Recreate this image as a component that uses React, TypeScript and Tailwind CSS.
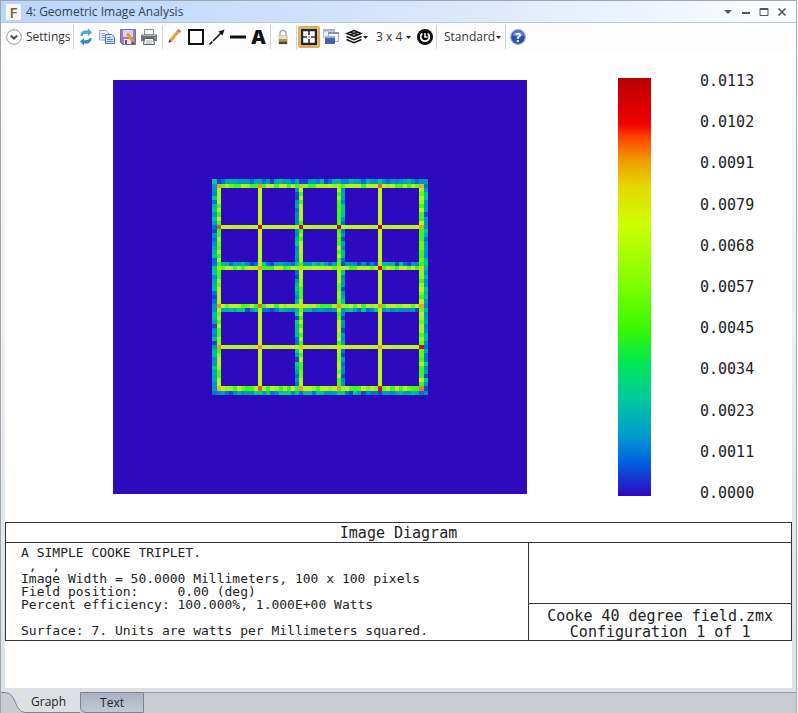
import type { ReactNode } from 'react';

const LINES = [25, 35, 45, 54, 64, 74];

// Grid lines that spill over into a neighbouring pixel row or column
const SPILL: Record<number, number> = { 25: 24, 45: 44, 54: 55, 74: 75 };

const NODES = [
  ['#e8a41c', '#ec9422', '#d8c020', '#c8e01c', '#ee6a14', '#dcb41e'],
  ['#e4520c', '#d01008', '#c80c08', '#b00c10', '#b40c10', '#dca81c'],
  ['#9cf418', '#ec9c1c', '#dcc41c', '#d8d81c', '#c81008', '#c8dc1c'],
  ['#e89c1c', '#e87410', '#d8dc1c', '#eca01c', '#e89c1c', '#e0a81c'],
  ['#e89c1c', '#ec941c', '#dcc81c', '#d0e41c', '#e0ac1c', '#c40c0c'],
  ['#dcc01c', '#e8640c', '#e4a41c', '#e8a01c', '#d01808', '#e87c14'],
];

const STEADY = ['#c4f41c', '#bcf41c', '#c8ee20', '#b4f81c'];
const MIXED = ['#4cf80c', '#8cfc10', '#b8f41c', '#3cf81c', '#a4f814', '#68fc0c', '#c0f01c'];
const FRINGE = ['#0094c8', '#00a8b4', '#0070dc', '#00b8a4', '#0088d0', '#1448d4', '#00c898', '#009cc0'];

const noise = (x: number, y: number) => {
  const n = Math.sin(x * 127.1 + y * 311.7) * 43758.5453;
  return n - Math.floor(n);
};

const pick = (list: string[], x: number, y: number) => list[Math.floor(noise(x, y) * list.length)];

function buildCells() {
  const cells = new Map<string, string>();
  const put = (x: number, y: number, fill: string) => cells.set(`${x},${y}`, fill);

  for (const line of LINES) {
    const side = SPILL[line];
    if (!side) continue;
    for (let i = 24; i <= 75; i++) {
      put(side, i, pick(FRINGE, side, i));
      put(i, side, pick(FRINGE, i, side));
    }
  }
  for (const line of LINES) {
    const colours = SPILL[line] ? MIXED : STEADY;
    for (let i = 25; i <= 74; i++) {
      put(line, i, pick(colours, line, i));
      put(i, line, pick(line === 54 ? [...MIXED, ...STEADY] : colours, i, line));
    }
  }
  LINES.forEach((y, row) => LINES.forEach((x, col) => put(x, y, NODES[row][col])));
  return [...cells].map(([key, fill]) => {
    const [x, y] = key.split(',').map(Number);
    return { x, y, fill };
  });
}

const CELLS = buildCells();

const SCALE = ['0.0113', '0.0102', '0.0091', '0.0079', '0.0068', '0.0057', '0.0045', '0.0034', '0.0023', '0.0011', '0.0000'];

const DETAILS = `A SIMPLE COOKE TRIPLET.
 ,  ,
Image Width = 50.0000 Millimeters, 100 x 100 pixels
Field position:     0.00 (deg)
Percent efficiency: 100.000%, 1.000E+00 Watts

Surface: 7. Units are watts per Millimeters squared.`;

const SOURCE = `Cooke 40 degree field.zmx
Configuration 1 of 1`;

function Icon({ children }: { children: ReactNode }) {
  return (
    <svg viewBox="0 0 18 18" className="size-[18px] shrink-0" fill="none" aria-hidden="true">
      {children}
    </svg>
  );
}

function Tool({ label, children }: { label: string; children: ReactNode }) {
  return (
    <button type="button" aria-label={label} title={label} className="flex w-[21px] shrink-0 items-center justify-center">
      <Icon>{children}</Icon>
    </button>
  );
}

function Separator() {
  return <div className="mx-px h-6 w-px shrink-0 bg-[#cfd3d8]" />;
}

function Caret() {
  return (
    <svg viewBox="0 0 5 3" className="h-[3px] w-[5px] shrink-0" aria-hidden="true">
      <path d="M0 0h5L2.5 3z" fill="#222" />
    </svg>
  );
}

function TitleBar() {
  return (
    <header className="flex h-[22px] shrink-0 items-center border-b border-[#b5c9de] bg-linear-to-r from-[#b9d5fa] via-[#d8e7fc] via-55% to-[#fdfdff] pr-[5px] pl-[5px]">
      <span className="mr-[5px] flex h-4 w-[15px] items-center justify-center bg-[#f7f8f4] text-[15px] leading-4 font-semibold text-[#66664e]">
        F
      </span>
      <h1 className="flex-1 text-[12px] text-[#33404f]">4: Geometric Image Analysis</h1>
      <div className="flex items-center text-[#555]">
        <button type="button" aria-label="Window menu" className="flex w-[18px] justify-center">
          <svg viewBox="0 0 12 12" className="size-3"><path d="M2 4h8L6 8z" fill="currentColor" /></svg>
        </button>
        <button type="button" aria-label="Minimize" className="flex w-[18px] justify-center">
          <svg viewBox="0 0 12 12" className="size-3"><path d="M2 6h8v2H2z" fill="currentColor" /></svg>
        </button>
        <button type="button" aria-label="Maximize" className="flex w-[18px] justify-center">
          <svg viewBox="0 0 12 12" className="size-3"><path d="M2 2.5h8v7H2zM2 3.5h8" fill="none" stroke="currentColor" /></svg>
        </button>
        <button type="button" aria-label="Close" className="flex w-[18px] justify-center">
          <svg viewBox="0 0 12 12" className="size-3"><path d="M2.5 2.5l7 7M9.5 2.5l-7 7" stroke="currentColor" strokeWidth="1.6" /></svg>
        </button>
      </div>
    </header>
  );
}

function Toolbar() {
  return (
    <div role="toolbar" className="flex h-7 shrink-0 items-center bg-[#fdfdfd] pl-1 text-[12px] text-[#333]">
      <button type="button" className="flex w-[67px] shrink-0 items-center gap-[3px]">
        <Icon>
          <circle cx="9" cy="9" r="7.3" fill="#fff" stroke="#999" />
          <path d="M5.8 7.5L9 10.7l3.2-3.2" stroke="#444" strokeWidth="1.8" />
        </Icon>
        Settings
      </button>
      <Separator />

      <Tool label="Refresh">
        <path d="M3.5 8c0-3.500 2-5.500 5.500-5.500h2V.5L15 4.500l-4 3.500V5.800H9C7 5.800 6 6.500 5.500 8z" fill="#45a6da" />
        <path d="M14.500 10c0 3.500-2 5.500-5.500 5.500H7v2L3 13.500 7 10v2.200h2c2 0 3-.7 3.500-2.200z" fill="#2a8bc8" />
      </Tool>
      <Tool label="Copy">
        <path d="M1.500 2.500H8L10.500 5v7h-9z" fill="#f0f5ff" stroke="#8fa6d0" />
        <path d="M3 5.500h4M3 7.500h4M3 9.500h4" stroke="#8fa9d8" />
        <path d="M7.500 6.500h6L16.500 9v6.500h-9z" fill="#d6e4fb" stroke="#4a70b4" />
        <path d="M9 9.500h4M9 11.500h6M9 13.500h6" stroke="#5c86cc" />
      </Tool>
      <Tool label="Save">
        <path d="M1.500 1.500h15v15h-13l-2-2z" fill="#9a80bc" stroke="#80689f" />
        <path d="M4 2h10v7H4z" fill="#ddd2ec" />
        <path d="M5 11h7v5H5z" fill="#efe9dc" />
        <path d="M6 12h2v4H6z" fill="#5c4c80" />
        <path d="M8 5.500l6.500 8.500" stroke="#e0983a" strokeWidth="3" />
        <path d="M13.500 13.500l2.500 3-3.500-1.500z" fill="#4b3a28" />
      </Tool>
      <Tool label="Print">
        <path d="M4.500 1.500h9V7h-9z" fill="#f5f5f5" stroke="#8a8f94" />
        <path d="M1 6.500h16V13H1z" fill="#6d7377" />
        <path d="M2 7.500h14" stroke="#a9afb3" />
        <path d="M4.500 10.500h9l1 6h-11z" fill="#fafafa" stroke="#565b60" />
        <path d="M6 13h6M6 15h6" stroke="#aaa" />
        <path d="M14 9h2v2h-2z" fill="#62c54b" />
      </Tool>
      <div className="w-0.5 shrink-0" />
      <Separator />

      <Tool label="Pencil">
        <path d="M4.500 12.500l7-8.500" stroke="#dc9a36" strokeWidth="3.4" />
        <path d="M4.800 11l5.500-7" stroke="#f4c777" />
        <path d="M10.500 3l2-2 2.500 2-1.600 2.300z" fill="#cb6d67" />
        <path d="M2.500 15l.8-3.600 2.600 2.100z" fill="#594028" />
      </Tool>
      <Tool label="Rectangle">
        <path d="M2 2h14v14H2z" stroke="#111" strokeWidth="2" />
      </Tool>
      <Tool label="Arrow">
        <path d="M1.500 16.500L13.500 4.500" stroke="#111" strokeWidth="1.6" strokeDasharray="4 1 20" />
        <path d="M16.500 1.500l-2 6-4-4z" fill="#111" />
      </Tool>
      <Tool label="Line">
        <path d="M1 7.500h16v3H1z" fill="#111" />
      </Tool>
      <button type="button" aria-label="Text annotation" className="w-[21px] shrink-0 text-center text-[20px] leading-5 font-extrabold text-[#111]">
        A
      </button>
      <Separator />

      <Tool label="Lock">
        <path d="M6 8V5.500c0-4 6-4 6 0V8" stroke="#a4a8ac" strokeWidth="1.4" />
        <path d="M4.800 7.500h8.500V16H4.800z" fill="#dcdcd8" stroke="#b8b8b2" strokeWidth=".6" />
        <path d="M5 11h8v2.500H5z" fill="#b09b36" />
        <path d="M5 13.500h8V16H5z" fill="#4a4638" />
      </Tool>
      <div className="w-0.5 shrink-0" />
      <Separator />

      <button
        type="button"
        aria-label="Fit window"
        aria-pressed="true"
        className="flex size-[22px] shrink-0 items-center justify-center rounded-xs border-2 border-[#e2ae50] bg-[#fae2ad]"
      >
        <Icon>
          <path d="M2 2h14v14H2z" fill="#fff" stroke="#252525" strokeWidth="2.4" />
          <path d="M9 3v4M9 11v4M3 9h4M11 9h4" stroke="#333" strokeWidth="1.6" />
          <path d="M9 8v2M8 9h2" stroke="#aaa" />
        </Icon>
      </button>
      <Tool label="Windows">
        <path d="M1.500 1.500h11v8h-11z" fill="#e9eef6" stroke="#b4bccb" />
        <path d="M1 1h12v2.500H1z" fill="#a5b2c8" />
        <path d="M6.500 4.500h10v9h-10z" fill="#f4f6fa" stroke="#9aa6b9" />
        <path d="M6 4h11v2H6z" fill="#8594af" />
        <path d="M3 8h10v8H3z" fill="#4a62ac" />
        <path d="M3 8h10v2H3z" fill="#9fb1d8" />
      </Tool>
      <button type="button" aria-label="Layers" className="flex w-[30px] shrink-0 items-center pl-1">
        <Icon>
          <path d="M9 2.500L16 5.500 9 8.500 2 5.500z" fill="#fff" stroke="#111" strokeWidth="1.5" />
          <path d="M5 4.200l8 2.600M13 4.200L5 6.800M1.500 8.500L9 11.800l7.500-3.300M1.500 11.500L9 14.800l7.500-3.300" stroke="#111" strokeWidth="1.5" />
        </Icon>
        <Caret />
      </button>
      <button type="button" className="ml-[5px] flex w-[35px] shrink-0 items-center justify-between whitespace-nowrap">
        3 x 4
        <Caret />
      </button>
      <div className="w-[3px] shrink-0" />
      <Tool label="Auto update">
        <circle cx="9" cy="9" r="8" fill="#080808" />
        <path d="M6.300 5.500a4.300 4.300 0 1 0 5.400 0" stroke="#fff" strokeWidth="1.8" />
        <path d="M9 5v4h2.500" stroke="#fff" strokeWidth="1.5" />
      </Tool>
      <Separator />

      <button type="button" className="ml-1.5 flex w-[57px] shrink-0 items-center justify-between">
        Standard
        <Caret />
      </button>
      <div className="w-[3px] shrink-0" />
      <Separator />
      <Tool label="Help">
        <circle cx="9" cy="9" r="7.3" fill="#2750ad" stroke="#91a4c6" strokeWidth="1.2" />
        <path d="M3.500 7.500a5.700 5.700 0 0 1 11 0C11 9 7 9 3.500 7.500z" fill="#648ce0" />
        <text x="9" y="13.500" textAnchor="middle" fontSize="12" fontWeight="700" fill="#fff">
          ?
        </text>
      </Tool>
    </div>
  );
}

function Heatmap() {
  return (
    <svg viewBox="0 0 100 100" shapeRendering="crispEdges" className="my-[9px] aspect-square w-full bg-[#2d0abe]" role="img" aria-label="Irradiance map">
      {CELLS.map((cell) => (
        <rect key={`${cell.x}-${cell.y}`} x={cell.x} y={cell.y} width="1" height="1" fill={cell.fill} />
      ))}
    </svg>
  );
}

function Graph() {
  return (
    <main className="flex-1 bg-white pt-5 text-[#222]">
      <div className="grid grid-cols-[108fr_414fr_91fr_33fr_49fr_92fr]">
        <div />
        <Heatmap />
        <div />
        <div className="my-[7px] bg-[linear-gradient(to_bottom,#b80000_0%,#f00000_11%,#ff4000_14%,#f0a000_20%,#e4d800_26%,#ccff00_35%,#80ff00_49%,#38f800_60%,#00e850_68%,#00c8a0_77%,#0098d0_86%,#0060e0_92%,#3008c0_100%)]" />
        <div />
        <ol className="flex flex-col justify-between font-['DejaVu_Sans_Mono',monospace] text-[15px] leading-5">
          {SCALE.map((value) => (
            <li key={value}>{value}</li>
          ))}
        </ol>
      </div>

      <section className="mt-[19px] border border-[#333] font-['DejaVu_Sans_Mono',monospace]">
        <h2 className="border-b border-[#333] pt-px text-center text-[15px] leading-[18px]">Image Diagram</h2>
        <div className="grid grid-cols-[2fr_1fr]">
          <pre className="border-r border-[#333] pt-[3px] pb-[3px] pl-[15px] font-['DejaVu_Sans_Mono',monospace] text-[13px] leading-[13px]">
            {DETAILS}
          </pre>
          <div className="flex flex-col">
            <div className="flex-1 border-b border-[#333]" />
            <p className="pt-1 text-center text-[15px] leading-4 whitespace-pre-line">{SOURCE}</p>
          </div>
        </div>
      </section>
    </main>
  );
}

function Tabs() {
  return (
    <nav role="tablist" className="flex h-[21px] shrink-0 bg-[#c9ccd3] text-[12px] text-[#222]">
      <button type="button" role="tab" aria-selected="true" className="flex w-[79px] items-center">
        <svg viewBox="0 0 24 21" className="h-[21px] w-6 shrink-0" aria-hidden="true">
          <path d="M4 0h20v21C13 20 16 1 4 .5z" fill="#dce0e4" />
          <path d="M0 .5h4C16 1 13 20 24 20.500" fill="none" stroke="#7b8290" />
        </svg>
        <span className="flex h-full flex-1 items-center border-b border-[#7b8290] bg-[#dce0e4] pl-[6px]">Graph</span>
      </button>
      <button
        type="button"
        role="tab"
        aria-selected="false"
        className="w-16 rounded-bl-md border border-[#7b8290] bg-linear-to-b from-[#a9b1c1] to-[#c3cad6]"
      >
        Text
      </button>
      <div className="flex-1 border-t border-[#969ca5]" />
    </nav>
  );
}

export default function App() {
  return (
    <div className="min-h-screen bg-[#f2f3f6] pr-px">
      <div className="flex min-h-screen flex-col border-t border-r border-l border-t-[#a0a5b0] border-r-[#a8b0b8] border-l-[#a0a5ac] bg-white font-['Open_Sans','Noto_Sans',sans-serif]">
        <TitleBar />
        <Toolbar />
        <div className="flex flex-1 flex-col bg-linear-to-b from-[#fafbfb] to-[#dde1e4] pr-1 pb-1 pl-1">
          <Graph />
        </div>
        <Tabs />
      </div>
    </div>
  );
}
